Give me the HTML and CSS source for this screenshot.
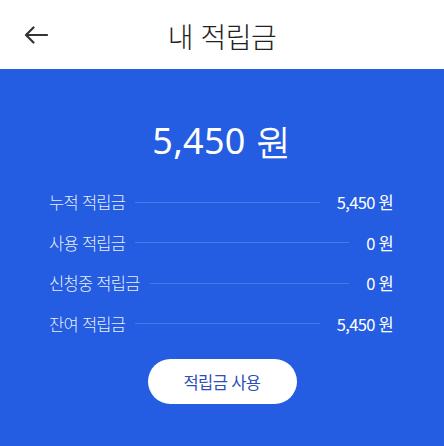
FILE: index.html
```html
<!DOCTYPE html>
<html lang="ko">

<head>
    <meta charset="UTF-8">
    <meta name="viewport" content="width=device-width, initial-scale=1.0">
    <title>내 적립금</title>
    <link rel="stylesheet" href="styles.css">
</head>

<body>

    <header class="topbar">
        <button class="back" aria-label="뒤로">
            <svg width="24" height="18" viewBox="0 0 24 18">
                <path d="M23 9H2M9.5 1.5L2 9l7.5 7.5" fill="none" stroke="#333" stroke-width="2.2" stroke-linecap="round" stroke-linejoin="round" />
            </svg>
        </button>
        <h1>내 적립금</h1>
    </header>

    <main class="point">
        <div class="total">5,450 원</div>

        <ul class="rows">
            <li class="row">
                <span class="label">누적 적립금</span>
                <span class="line"></span>
                <span class="value">5,450 원</span>
            </li>
            <li class="row">
                <span class="label">사용 적립금</span>
                <span class="line"></span>
                <span class="value">0 원</span>
            </li>
            <li class="row">
                <span class="label">신청중 적립금</span>
                <span class="line"></span>
                <span class="value">0 원</span>
            </li>
            <li class="row">
                <span class="label">잔여 적립금</span>
                <span class="line"></span>
                <span class="value">5,450 원</span>
            </li>
        </ul>

        <button class="use">적립금 사용</button>
    </main>

</body>

</html>
```

FILE: styles.css
```css
* {
    box-sizing: border-box;
    margin: 0;
    padding: 0;
}

body {
    font-family: "Noto Sans CJK KR", "Noto Sans", sans-serif;
    background-color: #245de2;
    width: 444px;
    height: 446px;
    overflow: hidden;
}

.topbar {
    background-color: #fff;
    height: 69px;
    display: flex;
    align-items: center;
    justify-content: center;
    position: relative;
}

.back {
    position: absolute;
    left: 24px;
    top: 26px;
    background: none;
    border: none;
    display: flex;
}

.topbar h1 {
    font-size: 28px;
    font-weight: 300;
    color: #222;
    letter-spacing: -0.5px;
    margin-top: 2px;
}

.point {
    display: flex;
    flex-direction: column;
    align-items: center;
    color: #fff;
    padding-top: 48px;
}

.total {
    font-family: "Noto Sans", sans-serif;
    font-size: 36px;
    line-height: 48px;
    letter-spacing: 0.3px;
}

.rows {
    list-style: none;
    width: 100%;
    padding: 17px 51px 0 49px;
}

.row {
    display: flex;
    align-items: center;
    height: 40.5px;
    font-size: 16.5px;
    letter-spacing: -0.7px;
}

.label {
    font-weight: 300;
    color: rgba(255, 255, 255, 0.92);
}

.line {
    flex: 1;
    height: 1px;
    background-color: rgba(255, 255, 255, 0.18);
    margin: 0 17px 0 10px;
}

.value {
    color: #fff;
}

.use {
    margin-top: 15px;
    width: 149px;
    height: 45px;
    border: none;
    border-radius: 23px;
    background-color: #fff;
    color: #2d4fb9;
    font-family: "Noto Sans CJK KR", sans-serif;
    font-size: 16.5px;
    letter-spacing: -0.6px;
}
```
